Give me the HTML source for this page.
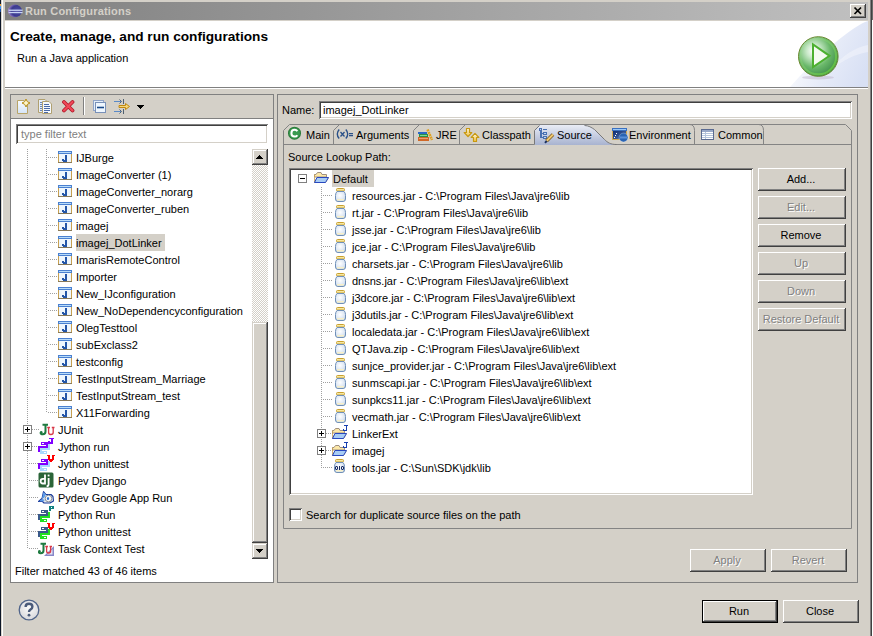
<!DOCTYPE html><html><head><meta charset="utf-8"><style>
html,body{margin:0;padding:0}
body{width:873px;height:636px;overflow:hidden;background:#d4d0c8;position:relative;font-family:"Liberation Sans",sans-serif;font-size:11px;color:#000}
div,svg{position:absolute}
.t{white-space:pre;line-height:13px;font-size:11px}
.b{white-space:pre;line-height:13px;font-size:11px;font-weight:bold}
.dis{color:#808080;text-shadow:1px 1px 0 #fff}
</style></head><body>

<div style="left:0px;top:0px;width:1px;height:636px;background:#0b1526"></div>
<div style="left:1px;top:0px;width:1px;height:636px;background:#d8d4cc"></div>
<div style="left:0px;top:4px;width:1px;height:2px;background:#e8a040"></div>
<div style="left:0px;top:6px;width:1px;height:3px;background:#3a90f0"></div>
<div style="left:0px;top:9px;width:1px;height:3px;background:#1a50a0"></div>
<div style="left:2px;top:0px;width:1px;height:636px;background:#ffffff"></div>
<div style="left:870px;top:0px;width:1px;height:636px;background:#808080"></div>
<div style="left:871px;top:0px;width:1px;height:636px;background:#404040"></div>
<div style="left:872px;top:0px;width:1px;height:636px;background:#fff"></div>
<div style="left:872px;top:0px;width:1px;height:20px;background:#6a6a6a"></div>
<div style="left:5px;top:2px;width:863px;height:18px;background:linear-gradient(to right,#808080,#c0c0c0)"></div>
<svg style="left:7px;top:3px" width="16" height="16" viewBox="0 0 16 16"><defs><radialGradient id="eg" cx="0.65" cy="0.5" r="0.75"><stop offset="0" stop-color="#5050a8"/><stop offset="0.55" stop-color="#3a3a8e"/><stop offset="0.8" stop-color="#8a70c0"/><stop offset="1" stop-color="#f0c8f0"/></radialGradient></defs><ellipse cx="8" cy="7.9" rx="7" ry="6.3" fill="url(#eg)"/><rect x="1.6" y="6.6" width="14" height="1.3" fill="#c8d4f4"/><rect x="1.6" y="8.9" width="14" height="1.3" fill="#c8d4f4"/></svg>
<div class="b" style="left:25px;top:5px;color:#d4d0c8;letter-spacing:0.2px">Run Configurations</div>
<div style="left:850px;top:4px;width:16px;height:14px;background:#d4d0c8;box-shadow:inset -1px -1px #404040,inset 1px 1px #fff,inset -2px -2px #808080"></div>
<svg style="left:850px;top:4px" width="16" height="14" viewBox="0 0 16 14"><path d="M4.5 3.5 L11 10 M11 3.5 L4.5 10" stroke="#000" stroke-width="1.7"/></svg>
<div style="left:5px;top:21px;width:863px;height:66px;background:#fff"></div>
<svg style="left:790px;top:21px" width="78" height="66" viewBox="0 0 78 66"><defs><linearGradient id="hg" x1="0" y1="0.3" x2="1" y2="0.7"><stop offset="0" stop-color="#fff"/><stop offset="0.55" stop-color="#e6ebf8"/><stop offset="1" stop-color="#d8e0f4"/></linearGradient></defs><path d="M78 0 C64 4 30 32 0 66 L78 66 Z" fill="url(#hg)"/><path d="M78 24 C66 26 52 34 40 50 C54 38 66 33 78 31 Z" fill="#f2f4fb" opacity="0.55"/></svg>
<div style="left:5px;top:87px;width:863px;height:1px;background:#808080"></div>
<div style="left:5px;top:88px;width:863px;height:1px;background:#fff"></div>
<div class="b" style="left:10px;top:31px;font-size:12px;transform:scaleX(1.138);transform-origin:0 0">Create, manage, and run configurations</div>
<div class="t" style="left:17px;top:52px;">Run a Java application</div>
<svg style="left:796px;top:34px" width="45" height="47" viewBox="0 0 45 47"><defs><radialGradient id="pg" cx="0.38" cy="0.36" r="0.7"><stop offset="0" stop-color="#ffffff"/><stop offset="0.25" stop-color="#c8e8c8"/><stop offset="0.6" stop-color="#6ab86a"/><stop offset="1" stop-color="#3a8a48"/></radialGradient><linearGradient id="pr" x1="0" y1="0" x2="1" y2="1"><stop offset="0" stop-color="#b8e8a0" stop-opacity="0"/><stop offset="1" stop-color="#58c030"/></linearGradient></defs><ellipse cx="22" cy="43.6" rx="16" ry="1.8" fill="#c0b4cc" opacity="0.5"/><circle cx="22.3" cy="22.5" r="19.8" fill="url(#pg)" stroke="#6a8a30" stroke-width="1"/><circle cx="22.3" cy="22.5" r="17.8" fill="none" stroke="url(#pr)" stroke-width="2"/><path d="M17 10.5 L17 33 L33.5 21.8 Z" fill="#f4fbf2" stroke="#4cb030" stroke-width="2" stroke-linejoin="miter"/></svg>
<div style="left:10px;top:94px;width:264px;height:489px;background:#d4d0c8;box-shadow:inset 0 0 0 1px #808080"></div>
<div style="left:11px;top:119px;width:262px;height:463px;background:#fff"></div>
<div style="left:11px;top:118px;width:262px;height:1px;background:#808080"></div>
<svg style="left:16px;top:98px" width="15" height="17" viewBox="0 0 15 17"><defs><linearGradient id="ng" x1="0" y1="0" x2="0" y2="1"><stop offset="0" stop-color="#fafcff"/><stop offset="1" stop-color="#d4e4f8"/></linearGradient></defs>
<path d="M1.5 2.5 H8 L11.5 6 V15.5 H1.5 Z" fill="url(#ng)" stroke="#b8a468" stroke-width="1"/>
<path d="M10 1 L11.3 3.7 L14 5 L11.3 6.3 L10 9 L8.7 6.3 L6 5 L8.7 3.7 Z" fill="#f8e490" stroke="#b89020" stroke-width="1"/>
<path d="M10 3 V7 M8 5 H12" stroke="#fffbe0" stroke-width="1"/></svg>
<svg style="left:37px;top:98px" width="17" height="17" viewBox="0 0 17 17"><path d="M1.5 1.5 H8 L10 3.5 V14.5 H1.5 Z" fill="#e8eef8" stroke="#b0a070" stroke-width="1"/>
<path d="M3 4.5 H5 M3 6.5 H5 M3 8.5 H5 M3 10.5 H5 M3 12.5 H5" stroke="#6a88b8" stroke-width="1"/>
<path d="M5.5 3.5 H12 L14.5 6 V15.5 H5.5 Z" fill="#f6f9fd" stroke="#b0a070" stroke-width="1"/>
<path d="M7 6.5 H12 M7 8.5 H13 M7 10.5 H13 M7 12.5 H13 M7 14.5 H11" stroke="#4a6aa8" stroke-width="1"/></svg>
<svg style="left:61px;top:99px" width="15" height="14" viewBox="0 0 15 14"><path d="M3 3 L11.5 11.5 M11.5 3 L3 11.5" stroke="#b01828" stroke-width="3.8" stroke-linecap="round"/>
<path d="M3 3 L11.5 11.5 M11.5 3 L3 11.5" stroke="#f04858" stroke-width="2.2" stroke-linecap="round"/></svg>
<div style="left:83px;top:97px;width:1px;height:18px;background:#808080"></div>
<div style="left:84px;top:97px;width:1px;height:18px;background:#fff"></div>
<svg style="left:92px;top:99px" width="15" height="15" viewBox="0 0 15 15"><rect x="1.5" y="1.5" width="10" height="10" fill="#e4eef8" stroke="#90a4c8"/>
<rect x="3.5" y="3.5" width="10" height="10" fill="#eef6fe" stroke="#7890b8"/>
<path d="M5 8.5 H12" stroke="#1a4a8a" stroke-width="1.6"/></svg>
<svg style="left:113px;top:98px" width="18" height="17" viewBox="0 0 18 17"><path d="M1 3.5 H8 M1 13.5 H8" stroke="#5a8ac8" stroke-width="1"/>
<path d="M6.5 1.5 L8.5 3.5 L6.5 5.5 M6.5 11.5 L8.5 13.5 L6.5 15.5" fill="none" stroke="#506070" stroke-width="1"/>
<path d="M10.5 1 V6 M10.5 11 V16" stroke="#506070" stroke-width="1"/>
<path d="M6 7.5 H12.5 V5.5 L16.5 8.5 L12.5 11.5 V9.5 H6 Z" fill="#f8d878" stroke="#c08810" stroke-width="1"/></svg>
<svg style="left:137px;top:105px" width="7" height="4" viewBox="0 0 7 4"><rect x="0" y="0" width="7" height="1" fill="#000"/><rect x="1" y="1" width="5" height="1" fill="#000"/><rect x="2" y="2" width="3" height="1" fill="#000"/><rect x="3" y="3" width="1" height="1" fill="#000"/></svg>
<div style="left:16px;top:124px;width:252px;height:20px;background:#fff;box-shadow:inset 1px 1px #808080,inset -1px -1px #fff,inset 2px 2px #404040,inset -2px -2px #d4d0c8"></div>
<div class="t" style="left:21px;top:128px;color:#808080">type filter text</div>
<div style="left:48px;top:157px;width:10px;height:1px;background:repeating-linear-gradient(to right,#a0a0a0 0,#a0a0a0 1px,transparent 1px,transparent 2px)"></div>
<svg style="left:58px;top:151px" width="14" height="12" viewBox="0 0 14 12"><rect x="0" y="0" width="14" height="12" fill="#c8a050"/><rect x="0" y="11" width="14" height="1" fill="#8a7a58"/><rect x="0" y="0" width="14" height="3" fill="#4a80d0"/><rect x="1" y="1" width="12" height="1" fill="#b8dcfa"/><rect x="1" y="3" width="12" height="8" fill="#eef6fd"/><rect x="7" y="4" width="2" height="6" fill="#2456a8"/><rect x="5" y="9" width="4" height="2" fill="#2456a8"/><rect x="4" y="8" width="2" height="2" fill="#2456a8"/></svg>
<div class="t" style="left:76px;top:152px;">IJBurge</div>
<div style="left:48px;top:174px;width:10px;height:1px;background:repeating-linear-gradient(to right,#a0a0a0 0,#a0a0a0 1px,transparent 1px,transparent 2px)"></div>
<svg style="left:58px;top:168px" width="14" height="12" viewBox="0 0 14 12"><rect x="0" y="0" width="14" height="12" fill="#c8a050"/><rect x="0" y="11" width="14" height="1" fill="#8a7a58"/><rect x="0" y="0" width="14" height="3" fill="#4a80d0"/><rect x="1" y="1" width="12" height="1" fill="#b8dcfa"/><rect x="1" y="3" width="12" height="8" fill="#eef6fd"/><rect x="7" y="4" width="2" height="6" fill="#2456a8"/><rect x="5" y="9" width="4" height="2" fill="#2456a8"/><rect x="4" y="8" width="2" height="2" fill="#2456a8"/></svg>
<div class="t" style="left:76px;top:169px;">ImageConverter (1)</div>
<div style="left:48px;top:191px;width:10px;height:1px;background:repeating-linear-gradient(to right,#a0a0a0 0,#a0a0a0 1px,transparent 1px,transparent 2px)"></div>
<svg style="left:58px;top:185px" width="14" height="12" viewBox="0 0 14 12"><rect x="0" y="0" width="14" height="12" fill="#c8a050"/><rect x="0" y="11" width="14" height="1" fill="#8a7a58"/><rect x="0" y="0" width="14" height="3" fill="#4a80d0"/><rect x="1" y="1" width="12" height="1" fill="#b8dcfa"/><rect x="1" y="3" width="12" height="8" fill="#eef6fd"/><rect x="7" y="4" width="2" height="6" fill="#2456a8"/><rect x="5" y="9" width="4" height="2" fill="#2456a8"/><rect x="4" y="8" width="2" height="2" fill="#2456a8"/></svg>
<div class="t" style="left:76px;top:186px;">ImageConverter_norarg</div>
<div style="left:48px;top:208px;width:10px;height:1px;background:repeating-linear-gradient(to right,#a0a0a0 0,#a0a0a0 1px,transparent 1px,transparent 2px)"></div>
<svg style="left:58px;top:202px" width="14" height="12" viewBox="0 0 14 12"><rect x="0" y="0" width="14" height="12" fill="#c8a050"/><rect x="0" y="11" width="14" height="1" fill="#8a7a58"/><rect x="0" y="0" width="14" height="3" fill="#4a80d0"/><rect x="1" y="1" width="12" height="1" fill="#b8dcfa"/><rect x="1" y="3" width="12" height="8" fill="#eef6fd"/><rect x="7" y="4" width="2" height="6" fill="#2456a8"/><rect x="5" y="9" width="4" height="2" fill="#2456a8"/><rect x="4" y="8" width="2" height="2" fill="#2456a8"/></svg>
<div class="t" style="left:76px;top:203px;">ImageConverter_ruben</div>
<div style="left:48px;top:225px;width:10px;height:1px;background:repeating-linear-gradient(to right,#a0a0a0 0,#a0a0a0 1px,transparent 1px,transparent 2px)"></div>
<svg style="left:58px;top:219px" width="14" height="12" viewBox="0 0 14 12"><rect x="0" y="0" width="14" height="12" fill="#c8a050"/><rect x="0" y="11" width="14" height="1" fill="#8a7a58"/><rect x="0" y="0" width="14" height="3" fill="#4a80d0"/><rect x="1" y="1" width="12" height="1" fill="#b8dcfa"/><rect x="1" y="3" width="12" height="8" fill="#eef6fd"/><rect x="7" y="4" width="2" height="6" fill="#2456a8"/><rect x="5" y="9" width="4" height="2" fill="#2456a8"/><rect x="4" y="8" width="2" height="2" fill="#2456a8"/></svg>
<div class="t" style="left:76px;top:220px;">imagej</div>
<div style="left:48px;top:242px;width:10px;height:1px;background:repeating-linear-gradient(to right,#a0a0a0 0,#a0a0a0 1px,transparent 1px,transparent 2px)"></div>
<svg style="left:58px;top:236px" width="14" height="12" viewBox="0 0 14 12"><rect x="0" y="0" width="14" height="12" fill="#c8a050"/><rect x="0" y="11" width="14" height="1" fill="#8a7a58"/><rect x="0" y="0" width="14" height="3" fill="#4a80d0"/><rect x="1" y="1" width="12" height="1" fill="#b8dcfa"/><rect x="1" y="3" width="12" height="8" fill="#eef6fd"/><rect x="7" y="4" width="2" height="6" fill="#2456a8"/><rect x="5" y="9" width="4" height="2" fill="#2456a8"/><rect x="4" y="8" width="2" height="2" fill="#2456a8"/></svg>
<div style="left:76px;top:234px;width:89px;height:17px;background:#d4d0c8"></div>
<div class="t" style="left:76px;top:237px;">imagej_DotLinker</div>
<div style="left:48px;top:259px;width:10px;height:1px;background:repeating-linear-gradient(to right,#a0a0a0 0,#a0a0a0 1px,transparent 1px,transparent 2px)"></div>
<svg style="left:58px;top:253px" width="14" height="12" viewBox="0 0 14 12"><rect x="0" y="0" width="14" height="12" fill="#c8a050"/><rect x="0" y="11" width="14" height="1" fill="#8a7a58"/><rect x="0" y="0" width="14" height="3" fill="#4a80d0"/><rect x="1" y="1" width="12" height="1" fill="#b8dcfa"/><rect x="1" y="3" width="12" height="8" fill="#eef6fd"/><rect x="7" y="4" width="2" height="6" fill="#2456a8"/><rect x="5" y="9" width="4" height="2" fill="#2456a8"/><rect x="4" y="8" width="2" height="2" fill="#2456a8"/></svg>
<div class="t" style="left:76px;top:254px;">ImarisRemoteControl</div>
<div style="left:48px;top:276px;width:10px;height:1px;background:repeating-linear-gradient(to right,#a0a0a0 0,#a0a0a0 1px,transparent 1px,transparent 2px)"></div>
<svg style="left:58px;top:270px" width="14" height="12" viewBox="0 0 14 12"><rect x="0" y="0" width="14" height="12" fill="#c8a050"/><rect x="0" y="11" width="14" height="1" fill="#8a7a58"/><rect x="0" y="0" width="14" height="3" fill="#4a80d0"/><rect x="1" y="1" width="12" height="1" fill="#b8dcfa"/><rect x="1" y="3" width="12" height="8" fill="#eef6fd"/><rect x="7" y="4" width="2" height="6" fill="#2456a8"/><rect x="5" y="9" width="4" height="2" fill="#2456a8"/><rect x="4" y="8" width="2" height="2" fill="#2456a8"/></svg>
<div class="t" style="left:76px;top:271px;">Importer</div>
<div style="left:48px;top:293px;width:10px;height:1px;background:repeating-linear-gradient(to right,#a0a0a0 0,#a0a0a0 1px,transparent 1px,transparent 2px)"></div>
<svg style="left:58px;top:287px" width="14" height="12" viewBox="0 0 14 12"><rect x="0" y="0" width="14" height="12" fill="#c8a050"/><rect x="0" y="11" width="14" height="1" fill="#8a7a58"/><rect x="0" y="0" width="14" height="3" fill="#4a80d0"/><rect x="1" y="1" width="12" height="1" fill="#b8dcfa"/><rect x="1" y="3" width="12" height="8" fill="#eef6fd"/><rect x="7" y="4" width="2" height="6" fill="#2456a8"/><rect x="5" y="9" width="4" height="2" fill="#2456a8"/><rect x="4" y="8" width="2" height="2" fill="#2456a8"/></svg>
<div class="t" style="left:76px;top:288px;">New_IJconfiguration</div>
<div style="left:48px;top:310px;width:10px;height:1px;background:repeating-linear-gradient(to right,#a0a0a0 0,#a0a0a0 1px,transparent 1px,transparent 2px)"></div>
<svg style="left:58px;top:304px" width="14" height="12" viewBox="0 0 14 12"><rect x="0" y="0" width="14" height="12" fill="#c8a050"/><rect x="0" y="11" width="14" height="1" fill="#8a7a58"/><rect x="0" y="0" width="14" height="3" fill="#4a80d0"/><rect x="1" y="1" width="12" height="1" fill="#b8dcfa"/><rect x="1" y="3" width="12" height="8" fill="#eef6fd"/><rect x="7" y="4" width="2" height="6" fill="#2456a8"/><rect x="5" y="9" width="4" height="2" fill="#2456a8"/><rect x="4" y="8" width="2" height="2" fill="#2456a8"/></svg>
<div class="t" style="left:76px;top:305px;">New_NoDependencyconfiguration</div>
<div style="left:48px;top:327px;width:10px;height:1px;background:repeating-linear-gradient(to right,#a0a0a0 0,#a0a0a0 1px,transparent 1px,transparent 2px)"></div>
<svg style="left:58px;top:321px" width="14" height="12" viewBox="0 0 14 12"><rect x="0" y="0" width="14" height="12" fill="#c8a050"/><rect x="0" y="11" width="14" height="1" fill="#8a7a58"/><rect x="0" y="0" width="14" height="3" fill="#4a80d0"/><rect x="1" y="1" width="12" height="1" fill="#b8dcfa"/><rect x="1" y="3" width="12" height="8" fill="#eef6fd"/><rect x="7" y="4" width="2" height="6" fill="#2456a8"/><rect x="5" y="9" width="4" height="2" fill="#2456a8"/><rect x="4" y="8" width="2" height="2" fill="#2456a8"/></svg>
<div class="t" style="left:76px;top:322px;">OlegTesttool</div>
<div style="left:48px;top:344px;width:10px;height:1px;background:repeating-linear-gradient(to right,#a0a0a0 0,#a0a0a0 1px,transparent 1px,transparent 2px)"></div>
<svg style="left:58px;top:338px" width="14" height="12" viewBox="0 0 14 12"><rect x="0" y="0" width="14" height="12" fill="#c8a050"/><rect x="0" y="11" width="14" height="1" fill="#8a7a58"/><rect x="0" y="0" width="14" height="3" fill="#4a80d0"/><rect x="1" y="1" width="12" height="1" fill="#b8dcfa"/><rect x="1" y="3" width="12" height="8" fill="#eef6fd"/><rect x="7" y="4" width="2" height="6" fill="#2456a8"/><rect x="5" y="9" width="4" height="2" fill="#2456a8"/><rect x="4" y="8" width="2" height="2" fill="#2456a8"/></svg>
<div class="t" style="left:76px;top:339px;">subExclass2</div>
<div style="left:48px;top:361px;width:10px;height:1px;background:repeating-linear-gradient(to right,#a0a0a0 0,#a0a0a0 1px,transparent 1px,transparent 2px)"></div>
<svg style="left:58px;top:355px" width="14" height="12" viewBox="0 0 14 12"><rect x="0" y="0" width="14" height="12" fill="#c8a050"/><rect x="0" y="11" width="14" height="1" fill="#8a7a58"/><rect x="0" y="0" width="14" height="3" fill="#4a80d0"/><rect x="1" y="1" width="12" height="1" fill="#b8dcfa"/><rect x="1" y="3" width="12" height="8" fill="#eef6fd"/><rect x="7" y="4" width="2" height="6" fill="#2456a8"/><rect x="5" y="9" width="4" height="2" fill="#2456a8"/><rect x="4" y="8" width="2" height="2" fill="#2456a8"/></svg>
<div class="t" style="left:76px;top:356px;">testconfig</div>
<div style="left:48px;top:378px;width:10px;height:1px;background:repeating-linear-gradient(to right,#a0a0a0 0,#a0a0a0 1px,transparent 1px,transparent 2px)"></div>
<svg style="left:58px;top:372px" width="14" height="12" viewBox="0 0 14 12"><rect x="0" y="0" width="14" height="12" fill="#c8a050"/><rect x="0" y="11" width="14" height="1" fill="#8a7a58"/><rect x="0" y="0" width="14" height="3" fill="#4a80d0"/><rect x="1" y="1" width="12" height="1" fill="#b8dcfa"/><rect x="1" y="3" width="12" height="8" fill="#eef6fd"/><rect x="7" y="4" width="2" height="6" fill="#2456a8"/><rect x="5" y="9" width="4" height="2" fill="#2456a8"/><rect x="4" y="8" width="2" height="2" fill="#2456a8"/></svg>
<div class="t" style="left:76px;top:373px;">TestInputStream_Marriage</div>
<div style="left:48px;top:395px;width:10px;height:1px;background:repeating-linear-gradient(to right,#a0a0a0 0,#a0a0a0 1px,transparent 1px,transparent 2px)"></div>
<svg style="left:58px;top:389px" width="14" height="12" viewBox="0 0 14 12"><rect x="0" y="0" width="14" height="12" fill="#c8a050"/><rect x="0" y="11" width="14" height="1" fill="#8a7a58"/><rect x="0" y="0" width="14" height="3" fill="#4a80d0"/><rect x="1" y="1" width="12" height="1" fill="#b8dcfa"/><rect x="1" y="3" width="12" height="8" fill="#eef6fd"/><rect x="7" y="4" width="2" height="6" fill="#2456a8"/><rect x="5" y="9" width="4" height="2" fill="#2456a8"/><rect x="4" y="8" width="2" height="2" fill="#2456a8"/></svg>
<div class="t" style="left:76px;top:390px;">TestInputStream_test</div>
<div style="left:48px;top:412px;width:10px;height:1px;background:repeating-linear-gradient(to right,#a0a0a0 0,#a0a0a0 1px,transparent 1px,transparent 2px)"></div>
<svg style="left:58px;top:406px" width="14" height="12" viewBox="0 0 14 12"><rect x="0" y="0" width="14" height="12" fill="#c8a050"/><rect x="0" y="11" width="14" height="1" fill="#8a7a58"/><rect x="0" y="0" width="14" height="3" fill="#4a80d0"/><rect x="1" y="1" width="12" height="1" fill="#b8dcfa"/><rect x="1" y="3" width="12" height="8" fill="#eef6fd"/><rect x="7" y="4" width="2" height="6" fill="#2456a8"/><rect x="5" y="9" width="4" height="2" fill="#2456a8"/><rect x="4" y="8" width="2" height="2" fill="#2456a8"/></svg>
<div class="t" style="left:76px;top:407px;">X11Forwarding</div>
<div style="left:32px;top:429px;width:7px;height:1px;background:repeating-linear-gradient(to right,#a0a0a0 0,#a0a0a0 1px,transparent 1px,transparent 2px)"></div>
<svg style="left:39px;top:421px" width="17" height="15" viewBox="0 0 17 15"><path d="M3.5 3.8 H9 M6.5 3.8 V10.5 Q6.5 13.3 3.8 13.3 Q1.8 13.3 1.5 11.5" fill="none" stroke="#1e7a40" stroke-width="2"/>
<circle cx="2.2" cy="11.2" r="1.3" fill="#1e7a40"/>
<path d="M8.2 6.5 H11 M12.8 6.5 H15.5 M9.6 6.5 V11.5 Q9.6 13.5 11.8 13.5 Q14.2 13.5 14.2 11.5 V6.5" fill="none" stroke="#d83848" stroke-width="1.3"/></svg>
<div class="t" style="left:58px;top:424px;">JUnit</div>
<div style="left:32px;top:446px;width:7px;height:1px;background:repeating-linear-gradient(to right,#a0a0a0 0,#a0a0a0 1px,transparent 1px,transparent 2px)"></div>
<svg style="left:38px;top:438px" width="17" height="17" viewBox="0 0 17 17"><g shape-rendering="crispEdges"><rect x="3" y="4" width="7" height="3" fill="#8000ff"/><rect x="8" y="5" width="2" height="5" fill="#8000ff"/><rect x="0" y="8" width="10" height="2" fill="#8000ff"/><rect x="0" y="8" width="2" height="6" fill="#8000ff"/><rect x="4" y="5" width="2" height="1" fill="#fff"/><rect x="10" y="6" width="2" height="6" fill="#a8d8ff"/><rect x="2" y="10" width="10" height="2" fill="#a8d8ff"/><rect x="2" y="10" width="2" height="6" fill="#a8d8ff"/><rect x="2" y="13" width="7" height="3" fill="#a8d8ff"/><rect x="6" y="14" width="2" height="1" fill="#fff"/></g><rect x="11" y="0" width="5" height="1" fill="#8000ff"/><rect x="13" y="0" width="2" height="6" fill="#8000ff"/><rect x="10" y="4" width="4" height="2" fill="#8000ff"/><rect x="10" y="3" width="2" height="2" fill="#8000ff"/></svg>
<div class="t" style="left:58px;top:441px;">Jython run</div>
<div style="left:29px;top:463px;width:10px;height:1px;background:repeating-linear-gradient(to right,#a0a0a0 0,#a0a0a0 1px,transparent 1px,transparent 2px)"></div>
<svg style="left:38px;top:455px" width="17" height="17" viewBox="0 0 17 17"><g shape-rendering="crispEdges"><rect x="3" y="4" width="7" height="3" fill="#8000ff"/><rect x="8" y="5" width="2" height="5" fill="#8000ff"/><rect x="0" y="8" width="10" height="2" fill="#8000ff"/><rect x="0" y="8" width="2" height="6" fill="#8000ff"/><rect x="4" y="5" width="2" height="1" fill="#fff"/><rect x="10" y="6" width="2" height="6" fill="#a8d8ff"/><rect x="2" y="10" width="10" height="2" fill="#a8d8ff"/><rect x="2" y="10" width="2" height="6" fill="#a8d8ff"/><rect x="2" y="13" width="7" height="3" fill="#a8d8ff"/><rect x="6" y="14" width="2" height="1" fill="#fff"/></g><rect x="9" y="0" width="3" height="1" fill="#ff0000"/><rect x="10" y="0" width="2" height="5" fill="#ff0000"/><rect x="14" y="0" width="3" height="1" fill="#ff0000"/><rect x="14" y="0" width="2" height="5" fill="#ff0000"/><rect x="11" y="4" width="4" height="2" fill="#ff0000"/><rect x="12" y="5" width="2" height="2" fill="#ff0000"/></svg>
<div class="t" style="left:58px;top:458px;">Jython unittest</div>
<div style="left:29px;top:480px;width:10px;height:1px;background:repeating-linear-gradient(to right,#a0a0a0 0,#a0a0a0 1px,transparent 1px,transparent 2px)"></div>
<svg style="left:38px;top:472px" width="16" height="16" viewBox="0 0 16 16"><rect x="0.5" y="0.5" width="15" height="15" rx="1.5" fill="#2a6438"/>
<path d="M7 2.5 V11.5 H4.8 Q2.6 11.5 2.6 9.2 Q2.6 6.8 4.8 6.8 H7" fill="none" stroke="#fff" stroke-width="1.8"/>
<path d="M10.6 6 V12.2 Q10.6 14.2 8.6 14.2" fill="none" stroke="#fff" stroke-width="1.8"/><rect x="9.7" y="2.6" width="1.8" height="1.8" fill="#fff"/></svg>
<div class="t" style="left:58px;top:475px;">Pydev Django</div>
<div style="left:29px;top:497px;width:10px;height:1px;background:repeating-linear-gradient(to right,#a0a0a0 0,#a0a0a0 1px,transparent 1px,transparent 2px)"></div>
<svg style="left:38px;top:490px" width="17" height="15" viewBox="0 0 17 15"><path d="M5.5 1.5 L8 4.5 H13 L15 6.5 L15.5 11 L12 13 H6 L4.5 11.5 L0.5 11.5 L4 8.5 Z" fill="#dfe6ee" stroke="#1a3a9a" stroke-width="1.1" stroke-linejoin="round"/>
<path d="M5.5 2 L8 4.5 L6 8 L4 8.5 Z" fill="#5a9ae8"/><path d="M1 11.3 L4.5 9 L7 10 L4.5 11.5 Z" fill="#5a9ae8"/>
<circle cx="10.5" cy="8.5" r="3.3" fill="#f4f6f8" stroke="#8a9098" stroke-width="1"/><ellipse cx="10" cy="8.5" rx="1.1" ry="1.6" fill="#2a70d0"/></svg>
<div class="t" style="left:58px;top:492px;">Pydev Google App Run</div>
<div style="left:29px;top:514px;width:10px;height:1px;background:repeating-linear-gradient(to right,#a0a0a0 0,#a0a0a0 1px,transparent 1px,transparent 2px)"></div>
<svg style="left:38px;top:506px" width="17" height="17" viewBox="0 0 17 17"><g shape-rendering="crispEdges"><rect x="3" y="4" width="7" height="3" fill="#3a5a8a"/><rect x="8" y="5" width="2" height="5" fill="#3a5a8a"/><rect x="0" y="8" width="10" height="2" fill="#3a5a8a"/><rect x="0" y="8" width="2" height="6" fill="#3a5a8a"/><rect x="4" y="5" width="2" height="1" fill="#fff"/><rect x="10" y="6" width="2" height="6" fill="#20e020"/><rect x="2" y="10" width="10" height="2" fill="#20e020"/><rect x="2" y="10" width="2" height="6" fill="#20e020"/><rect x="2" y="13" width="7" height="3" fill="#20e020"/><rect x="6" y="14" width="2" height="1" fill="#fff"/></g><rect x="11" y="0" width="2" height="5" fill="#108080"/><rect x="13" y="0" width="2" height="1" fill="#108080"/><rect x="14" y="0" width="2" height="3" fill="#108080"/><rect x="13" y="2" width="2" height="1" fill="#108080"/></svg>
<div class="t" style="left:58px;top:509px;">Python Run</div>
<div style="left:29px;top:531px;width:10px;height:1px;background:repeating-linear-gradient(to right,#a0a0a0 0,#a0a0a0 1px,transparent 1px,transparent 2px)"></div>
<svg style="left:38px;top:523px" width="17" height="17" viewBox="0 0 17 17"><g shape-rendering="crispEdges"><rect x="3" y="4" width="7" height="3" fill="#3a5a8a"/><rect x="8" y="5" width="2" height="5" fill="#3a5a8a"/><rect x="0" y="8" width="10" height="2" fill="#3a5a8a"/><rect x="0" y="8" width="2" height="6" fill="#3a5a8a"/><rect x="4" y="5" width="2" height="1" fill="#fff"/><rect x="10" y="6" width="2" height="6" fill="#20e020"/><rect x="2" y="10" width="10" height="2" fill="#20e020"/><rect x="2" y="10" width="2" height="6" fill="#20e020"/><rect x="2" y="13" width="7" height="3" fill="#20e020"/><rect x="6" y="14" width="2" height="1" fill="#fff"/></g><rect x="9" y="0" width="3" height="1" fill="#ff0000"/><rect x="10" y="0" width="2" height="5" fill="#ff0000"/><rect x="14" y="0" width="3" height="1" fill="#ff0000"/><rect x="14" y="0" width="2" height="5" fill="#ff0000"/><rect x="11" y="4" width="4" height="2" fill="#ff0000"/><rect x="12" y="5" width="2" height="2" fill="#ff0000"/></svg>
<div class="t" style="left:58px;top:526px;">Python unittest</div>
<div style="left:29px;top:548px;width:10px;height:1px;background:repeating-linear-gradient(to right,#a0a0a0 0,#a0a0a0 1px,transparent 1px,transparent 2px)"></div>
<svg style="left:38px;top:540px" width="17" height="17" viewBox="0 0 17 17"><path d="M6 16 L16 6 V16 Z" fill="#8888c8"/><path d="M9 14.5 L14.5 9 V14.5 Z" fill="#e4e4f4"/>
<path d="M2.5 3.8 H8 M5.5 3.8 V10.5 Q5.5 13.3 2.8 13.3 Q0.8 13.3 0.5 11.5" fill="none" stroke="#1e7a40" stroke-width="2"/>
<circle cx="1.4" cy="11.2" r="1.3" fill="#1e7a40"/>
<path d="M7.2 6.5 H10 M11.5 6.5 H14 M8.6 6.5 V11 Q8.6 13 10.6 13 Q12.6 13 12.6 11 V6.5" fill="none" stroke="#d83848" stroke-width="1.3"/></svg>
<div class="t" style="left:58px;top:543px;">Task Context Test</div>
<div style="left:27px;top:149px;width:1px;height:400px;background:repeating-linear-gradient(to bottom,#a0a0a0 0,#a0a0a0 1px,transparent 1px,transparent 2px)"></div>
<div style="left:46px;top:149px;width:1px;height:264px;background:repeating-linear-gradient(to bottom,#a0a0a0 0,#a0a0a0 1px,transparent 1px,transparent 2px)"></div>
<div style="left:23px;top:425px;width:9px;height:9px;background:#fff;box-shadow:inset 0 0 0 1px #808080"></div>
<div style="left:25px;top:429px;width:5px;height:1px;background:#000"></div>
<div style="left:27px;top:427px;width:1px;height:5px;background:#000"></div>
<div style="left:23px;top:442px;width:9px;height:9px;background:#fff;box-shadow:inset 0 0 0 1px #808080"></div>
<div style="left:25px;top:446px;width:5px;height:1px;background:#000"></div>
<div style="left:27px;top:444px;width:1px;height:5px;background:#000"></div>
<div style="left:252px;top:165px;width:16px;height:157px;background-color:#fff;background-image:repeating-conic-gradient(#d4d0c8 0 25%,#fff 0 50%);background-size:2px 2px;background-position:0 1px"></div>
<div style="left:252px;top:149px;width:16px;height:16px;background:#d4d0c8;box-shadow:inset -1px -1px #404040,inset 1px 1px #d4d0c8,inset -2px -2px #808080,inset 2px 2px #fff"></div>
<svg style="left:252px;top:149px" width="16" height="16" viewBox="0 0 16 16"><rect x="7" y="6" width="1" height="1" fill="#000"/><rect x="6" y="7" width="3" height="1" fill="#000"/><rect x="5" y="8" width="5" height="1" fill="#000"/><rect x="4" y="9" width="7" height="1" fill="#000"/></svg>
<div style="left:252px;top:322px;width:16px;height:221px;background:#d4d0c8;box-shadow:inset -1px -1px #404040,inset 1px 1px #d4d0c8,inset -2px -2px #808080,inset 2px 2px #fff"></div>
<div style="left:252px;top:543px;width:16px;height:16px;background:#d4d0c8;box-shadow:inset -1px -1px #404040,inset 1px 1px #d4d0c8,inset -2px -2px #808080,inset 2px 2px #fff"></div>
<svg style="left:252px;top:543px" width="16" height="16" viewBox="0 0 16 16"><rect x="7" y="9" width="1" height="1" fill="#000"/><rect x="6" y="8" width="3" height="1" fill="#000"/><rect x="5" y="7" width="5" height="1" fill="#000"/><rect x="4" y="6" width="7" height="1" fill="#000"/></svg>
<div class="t" style="left:15px;top:565px;">Filter matched 43 of 46 items</div>
<svg style="left:18px;top:599px" width="22" height="22" viewBox="0 0 22 22"><defs><radialGradient id="hgr" cx="0.5" cy="0.4" r="0.6"><stop offset="0" stop-color="#fafafa"/><stop offset="1" stop-color="#d8d8dc"/></radialGradient></defs>
<circle cx="11" cy="11" r="9.8" fill="url(#hgr)" stroke="#50648a" stroke-width="1.3"/>
<path d="M7.6 8 Q7.6 4.8 11 4.8 Q14.4 4.8 14.4 7.8 Q14.4 9.6 12.4 10.6 Q11 11.3 11 13" fill="none" stroke="#4a5a7a" stroke-width="2.4"/>
<circle cx="11" cy="16.2" r="1.4" fill="#4a5a7a"/></svg>
<div style="left:277px;top:94px;width:581px;height:489px;background:#d4d0c8;box-shadow:inset 0 0 0 1px #808080"></div>
<div class="t" style="left:282px;top:104px;">Name:</div>
<div style="left:319px;top:101px;width:533px;height:18px;background:#fff;box-shadow:inset 1px 1px #808080,inset -1px -1px #fff,inset 2px 2px #404040,inset -2px -2px #d4d0c8"></div>
<div class="t" style="left:323px;top:104px;">imagej_DotLinker</div>
<svg style="left:280px;top:120px" width="580" height="415" viewBox="0 0 580 415"><defs><linearGradient id="selg" x1="0" y1="0" x2="0" y2="1"><stop offset="0" stop-color="#e9ecf5"/><stop offset="1" stop-color="#a8b3d0"/></linearGradient></defs><path d="M535 145 L535 130 L540 125 L585 125 C589 125.5 591 127 594.5 129.5 L604.5 139.5 C607.5 142.5 610 144.5 615.5 144.5 L615.5 145 Z" transform="translate(-280,-120)" fill="url(#selg)" stroke="none"/><path d="M3.5 408.5 L3.5 10.5 L9.5 4.5 L565.5 4.5 L571.5 10.5 L571.5 408.5 Z" fill="none" stroke="#848484" stroke-width="1"/><path d="M3.5 24.5 L254.5 24.5 M334.5 24.5 L571.5 24.5" stroke="#848484" stroke-width="1"/><path d="M254.5 24.5 L254.5 10.5 L259.5 5.5 M304.5 5.5 C308.5 5.5 311.5 7.5 314.5 9.5 L324.5 19.5 C327.5 22.5 330.5 24.5 336.5 24.5" fill="none" stroke="#787878" stroke-width="1"/><path d="M53.5 24.5 L53.5 10.5 L59.5 4.5" fill="none" stroke="#848484" stroke-width="1"/><path d="M133.5 24.5 L133.5 10.5 L139.5 4.5" fill="none" stroke="#848484" stroke-width="1"/><path d="M179.5 24.5 L179.5 10.5 L185.5 4.5" fill="none" stroke="#848484" stroke-width="1"/><path d="M409.5 4.5 Q414.5 4.5 414.5 10.5 L414.5 24.5" fill="none" stroke="#848484" stroke-width="1"/><path d="M478.5 4.5 Q483.5 4.5 483.5 10.5 L483.5 24.5" fill="none" stroke="#848484" stroke-width="1"/></svg>
<div class="t" style="left:306px;top:129px;">Main</div>
<div class="t" style="left:356px;top:129px;">Arguments</div>
<div class="t" style="left:436px;top:129px;">JRE</div>
<div class="t" style="left:482px;top:129px;">Classpath</div>
<div class="t" style="left:557px;top:129px;">Source</div>
<div class="t" style="left:629px;top:129px;">Environment</div>
<div class="t" style="left:718px;top:129px;">Common</div>
<svg style="left:287px;top:126px" width="15" height="15" viewBox="0 0 15 15"><circle cx="7.5" cy="7.2" r="6.5" fill="#2a7a3a"/><circle cx="7.5" cy="7.2" r="5.5" fill="#3a9a50"/>
<path d="M10.3 5.2 Q9.5 3.8 7.7 3.8 Q4.4 3.8 4.4 7.2 Q4.4 10.6 7.7 10.6 Q9.5 10.6 10.3 9.2" fill="none" stroke="#fff" stroke-width="2"/></svg>
<svg style="left:336px;top:128px" width="18" height="12" viewBox="0 0 18 12"><path d="M3.2 1.5 Q1.3 3.5 1.3 6 Q1.3 8.5 3.2 10.5 M9.8 1.5 Q11.7 3.5 11.7 6 Q11.7 8.5 9.8 10.5" fill="none" stroke="#2a5088" stroke-width="1.4"/><path d="M4.5 4 L8.5 8.5 M8.5 4 L4.5 8.5" stroke="#2a5088" stroke-width="1.3"/><path d="M13 5.6 H17 M13 7.6 H17" stroke="#2a5088" stroke-width="1.1"/></svg>
<svg style="left:417px;top:127px" width="17" height="15" viewBox="0 0 17 15"><rect x="1" y="10" width="11" height="4" fill="#d06828"/><rect x="2" y="11" width="9" height="1" fill="#f0a070"/><rect x="2" y="7" width="9" height="3" fill="#2a9048"/><rect x="3" y="8" width="7" height="1" fill="#80d898"/><rect x="1" y="5" width="9" height="2" fill="#2a68c8"/><path d="M10.5 2.5 L15 13" stroke="#e0a020" stroke-width="2.6" stroke-dasharray="2 0.6"/></svg>
<svg style="left:463px;top:127px" width="18" height="16" viewBox="0 0 18 16"><defs><linearGradient id="arg" x1="0" y1="0" x2="0" y2="1"><stop offset="0" stop-color="#fffbe8"/><stop offset="1" stop-color="#f0c040"/></linearGradient></defs><path d="M3.5 1.5 H6.5 V5.5 H8.8 L5 9.6 L1.2 5.5 H3.5 Z" fill="url(#arg)" stroke="#c89810" stroke-width="1.2" stroke-linejoin="round"/><path d="M10.5 14.5 H13.5 V10.5 H15.8 L12 6.4 L8.2 10.5 H10.5 Z" fill="url(#arg)" stroke="#c89810" stroke-width="1.2" stroke-linejoin="round"/></svg>
<svg style="left:538px;top:127px" width="18" height="17" viewBox="0 0 18 17"><rect x="1" y="1" width="3" height="3" fill="#4a70b0"/><rect x="5" y="5" width="4" height="3" fill="#4a70b0"/><rect x="5" y="9" width="4" height="3" fill="#4a70b0"/><rect x="2" y="2" width="1" height="1" fill="#c8d8f0"/><rect x="6" y="6" width="2" height="1" fill="#c8d8f0"/><rect x="6" y="10" width="2" height="1" fill="#c8d8f0"/><rect x="5" y="2" width="4" height="1" fill="#4a70b0"/><rect x="2" y="4" width="2" height="6" fill="#4a70b0"/><rect x="2" y="6" width="4" height="1" fill="#4a70b0"/><rect x="2" y="10" width="4" height="1" fill="#4a70b0"/><path d="M15 7.5 L8.5 14" stroke="#7a5a20" stroke-width="3.6"/><path d="M15 7.5 L8.5 14" stroke="#f0c870" stroke-width="2"/><path d="M8.8 13.8 L7 15.8" stroke="#1a3060" stroke-width="2"/></svg>
<svg style="left:611px;top:127px" width="18" height="17" viewBox="0 0 18 17"><defs><linearGradient id="envg" x1="0" y1="0" x2="1" y2="1"><stop offset="0" stop-color="#0e2a70"/><stop offset="0.6" stop-color="#3a5a98"/><stop offset="1" stop-color="#b0b8c8"/></linearGradient></defs>
<rect x="1" y="1" width="15" height="12" fill="#d0a850"/><rect x="2" y="4" width="13" height="8" fill="url(#envg)"/>
<rect x="1" y="1" width="15" height="3" fill="#3a70c0"/><rect x="2" y="2" width="13" height="1" fill="#9ac8f8"/>
<rect x="3" y="10" width="1" height="1" fill="#fff"/><rect x="4" y="8" width="1" height="1" fill="#fff"/><rect x="5" y="6" width="1" height="1" fill="#fff"/>
<circle cx="12.5" cy="10.5" r="4.4" fill="#2a64b4" stroke="#fff" stroke-width="0.5" stroke-opacity="0.5"/><rect x="9" y="9.5" width="7" height="2" fill="#5a90d8"/></svg>
<svg style="left:701px;top:129px" width="13" height="11" viewBox="0 0 13 11"><rect x="0" y="0" width="13" height="11" fill="#5a6a90"/><rect x="1" y="1" width="11" height="2" fill="#98a8c8"/><rect x="1" y="3" width="11" height="7" fill="#b4c4dc"/><rect x="1" y="3" width="3" height="1" fill="#fff"/><rect x="5" y="3" width="7" height="1" fill="#fff"/><rect x="1" y="5" width="3" height="1" fill="#fff"/><rect x="5" y="5" width="7" height="1" fill="#fff"/><rect x="1" y="7" width="3" height="1" fill="#fff"/><rect x="5" y="7" width="7" height="1" fill="#fff"/><rect x="1" y="9" width="3" height="1" fill="#fff"/><rect x="5" y="9" width="7" height="1" fill="#fff"/></svg>
<div class="t" style="left:288px;top:151px;">Source Lookup Path:</div>
<div style="left:289px;top:168px;width:464px;height:327px;background:#fff;box-shadow:inset 1px 1px #808080,inset -1px -1px #fff,inset 2px 2px #404040,inset -2px -2px #d4d0c8"></div>
<div style="left:298px;top:174px;width:9px;height:9px;background:#fff;box-shadow:inset 0 0 0 1px #808080"></div>
<div style="left:300px;top:178px;width:5px;height:1px;background:#000"></div>
<svg style="left:313px;top:171px" width="17" height="13" viewBox="0 0 17 13"><path d="M1.5 3.5 H3 L4.5 1.5 H8 L9 3.5 H13.5 V6 H1.5 Z" fill="#fce8a8" stroke="#a09080" stroke-width="1"/>
<path d="M1.5 3.5 V11.5 L4 6.5 H15.5 L12.5 11.5 H1.5" fill="#f8d888" stroke="#c8a050" stroke-width="0.8"/>
<path d="M4 6.5 H15.5 L12.5 11.5 H1.5 Z" fill="#a8ccf4" stroke="#2848c0" stroke-width="1"/></svg>
<div style="left:332px;top:170px;width:42px;height:17px;background:#d4d0c8"></div>
<div class="t" style="left:333px;top:173px;">Default</div>
<div style="left:323px;top:195px;width:10px;height:1px;background:repeating-linear-gradient(to right,#a0a0a0 0,#a0a0a0 1px,transparent 1px,transparent 2px)"></div>
<svg style="left:335px;top:188px" width="11" height="14" viewBox="0 0 11 14"><defs><radialGradient id="jg" cx="0.45" cy="0.4" r="0.7"><stop offset="0" stop-color="#fff"/><stop offset="0.6" stop-color="#dfe8f4"/><stop offset="1" stop-color="#b8cce4"/></radialGradient></defs>
<rect x="1.5" y="0.5" width="8" height="2.5" rx="1" fill="#f8e8a0" stroke="#c8a030"/>
<path d="M2 3.5 H9 Q10.5 5 10.5 7.5 V11 Q10.5 13.5 8 13.5 H3 Q0.5 13.5 0.5 11 V7.5 Q0.5 5 2 3.5 Z" fill="url(#jg)" stroke="#7090b8" stroke-width="1"/>
<rect x="2" y="11" width="7" height="1.5" fill="#f8f0c8"/></svg>
<div class="t" style="left:352px;top:190px;">resources.jar - C:\Program Files\Java\jre6\lib</div>
<div style="left:323px;top:212px;width:10px;height:1px;background:repeating-linear-gradient(to right,#a0a0a0 0,#a0a0a0 1px,transparent 1px,transparent 2px)"></div>
<svg style="left:335px;top:205px" width="11" height="14" viewBox="0 0 11 14"><defs style="display:none"><radialGradient id="jg" cx="0.45" cy="0.4" r="0.7"><stop offset="0" stop-color="#fff"/><stop offset="0.6" stop-color="#dfe8f4"/><stop offset="1" stop-color="#b8cce4"/></radialGradient></defs>
<rect x="1.5" y="0.5" width="8" height="2.5" rx="1" fill="#f8e8a0" stroke="#c8a030"/>
<path d="M2 3.5 H9 Q10.5 5 10.5 7.5 V11 Q10.5 13.5 8 13.5 H3 Q0.5 13.5 0.5 11 V7.5 Q0.5 5 2 3.5 Z" fill="url(#jg)" stroke="#7090b8" stroke-width="1"/>
<rect x="2" y="11" width="7" height="1.5" fill="#f8f0c8"/></svg>
<div class="t" style="left:352px;top:207px;">rt.jar - C:\Program Files\Java\jre6\lib</div>
<div style="left:323px;top:229px;width:10px;height:1px;background:repeating-linear-gradient(to right,#a0a0a0 0,#a0a0a0 1px,transparent 1px,transparent 2px)"></div>
<svg style="left:335px;top:222px" width="11" height="14" viewBox="0 0 11 14"><defs style="display:none"><radialGradient id="jg" cx="0.45" cy="0.4" r="0.7"><stop offset="0" stop-color="#fff"/><stop offset="0.6" stop-color="#dfe8f4"/><stop offset="1" stop-color="#b8cce4"/></radialGradient></defs>
<rect x="1.5" y="0.5" width="8" height="2.5" rx="1" fill="#f8e8a0" stroke="#c8a030"/>
<path d="M2 3.5 H9 Q10.5 5 10.5 7.5 V11 Q10.5 13.5 8 13.5 H3 Q0.5 13.5 0.5 11 V7.5 Q0.5 5 2 3.5 Z" fill="url(#jg)" stroke="#7090b8" stroke-width="1"/>
<rect x="2" y="11" width="7" height="1.5" fill="#f8f0c8"/></svg>
<div class="t" style="left:352px;top:224px;">jsse.jar - C:\Program Files\Java\jre6\lib</div>
<div style="left:323px;top:246px;width:10px;height:1px;background:repeating-linear-gradient(to right,#a0a0a0 0,#a0a0a0 1px,transparent 1px,transparent 2px)"></div>
<svg style="left:335px;top:239px" width="11" height="14" viewBox="0 0 11 14"><defs style="display:none"><radialGradient id="jg" cx="0.45" cy="0.4" r="0.7"><stop offset="0" stop-color="#fff"/><stop offset="0.6" stop-color="#dfe8f4"/><stop offset="1" stop-color="#b8cce4"/></radialGradient></defs>
<rect x="1.5" y="0.5" width="8" height="2.5" rx="1" fill="#f8e8a0" stroke="#c8a030"/>
<path d="M2 3.5 H9 Q10.5 5 10.5 7.5 V11 Q10.5 13.5 8 13.5 H3 Q0.5 13.5 0.5 11 V7.5 Q0.5 5 2 3.5 Z" fill="url(#jg)" stroke="#7090b8" stroke-width="1"/>
<rect x="2" y="11" width="7" height="1.5" fill="#f8f0c8"/></svg>
<div class="t" style="left:352px;top:241px;">jce.jar - C:\Program Files\Java\jre6\lib</div>
<div style="left:323px;top:263px;width:10px;height:1px;background:repeating-linear-gradient(to right,#a0a0a0 0,#a0a0a0 1px,transparent 1px,transparent 2px)"></div>
<svg style="left:335px;top:256px" width="11" height="14" viewBox="0 0 11 14"><defs style="display:none"><radialGradient id="jg" cx="0.45" cy="0.4" r="0.7"><stop offset="0" stop-color="#fff"/><stop offset="0.6" stop-color="#dfe8f4"/><stop offset="1" stop-color="#b8cce4"/></radialGradient></defs>
<rect x="1.5" y="0.5" width="8" height="2.5" rx="1" fill="#f8e8a0" stroke="#c8a030"/>
<path d="M2 3.5 H9 Q10.5 5 10.5 7.5 V11 Q10.5 13.5 8 13.5 H3 Q0.5 13.5 0.5 11 V7.5 Q0.5 5 2 3.5 Z" fill="url(#jg)" stroke="#7090b8" stroke-width="1"/>
<rect x="2" y="11" width="7" height="1.5" fill="#f8f0c8"/></svg>
<div class="t" style="left:352px;top:258px;">charsets.jar - C:\Program Files\Java\jre6\lib</div>
<div style="left:323px;top:280px;width:10px;height:1px;background:repeating-linear-gradient(to right,#a0a0a0 0,#a0a0a0 1px,transparent 1px,transparent 2px)"></div>
<svg style="left:335px;top:273px" width="11" height="14" viewBox="0 0 11 14"><defs style="display:none"><radialGradient id="jg" cx="0.45" cy="0.4" r="0.7"><stop offset="0" stop-color="#fff"/><stop offset="0.6" stop-color="#dfe8f4"/><stop offset="1" stop-color="#b8cce4"/></radialGradient></defs>
<rect x="1.5" y="0.5" width="8" height="2.5" rx="1" fill="#f8e8a0" stroke="#c8a030"/>
<path d="M2 3.5 H9 Q10.5 5 10.5 7.5 V11 Q10.5 13.5 8 13.5 H3 Q0.5 13.5 0.5 11 V7.5 Q0.5 5 2 3.5 Z" fill="url(#jg)" stroke="#7090b8" stroke-width="1"/>
<rect x="2" y="11" width="7" height="1.5" fill="#f8f0c8"/></svg>
<div class="t" style="left:352px;top:275px;">dnsns.jar - C:\Program Files\Java\jre6\lib\ext</div>
<div style="left:323px;top:297px;width:10px;height:1px;background:repeating-linear-gradient(to right,#a0a0a0 0,#a0a0a0 1px,transparent 1px,transparent 2px)"></div>
<svg style="left:335px;top:290px" width="11" height="14" viewBox="0 0 11 14"><defs style="display:none"><radialGradient id="jg" cx="0.45" cy="0.4" r="0.7"><stop offset="0" stop-color="#fff"/><stop offset="0.6" stop-color="#dfe8f4"/><stop offset="1" stop-color="#b8cce4"/></radialGradient></defs>
<rect x="1.5" y="0.5" width="8" height="2.5" rx="1" fill="#f8e8a0" stroke="#c8a030"/>
<path d="M2 3.5 H9 Q10.5 5 10.5 7.5 V11 Q10.5 13.5 8 13.5 H3 Q0.5 13.5 0.5 11 V7.5 Q0.5 5 2 3.5 Z" fill="url(#jg)" stroke="#7090b8" stroke-width="1"/>
<rect x="2" y="11" width="7" height="1.5" fill="#f8f0c8"/></svg>
<div class="t" style="left:352px;top:292px;">j3dcore.jar - C:\Program Files\Java\jre6\lib\ext</div>
<div style="left:323px;top:314px;width:10px;height:1px;background:repeating-linear-gradient(to right,#a0a0a0 0,#a0a0a0 1px,transparent 1px,transparent 2px)"></div>
<svg style="left:335px;top:307px" width="11" height="14" viewBox="0 0 11 14"><defs style="display:none"><radialGradient id="jg" cx="0.45" cy="0.4" r="0.7"><stop offset="0" stop-color="#fff"/><stop offset="0.6" stop-color="#dfe8f4"/><stop offset="1" stop-color="#b8cce4"/></radialGradient></defs>
<rect x="1.5" y="0.5" width="8" height="2.5" rx="1" fill="#f8e8a0" stroke="#c8a030"/>
<path d="M2 3.5 H9 Q10.5 5 10.5 7.5 V11 Q10.5 13.5 8 13.5 H3 Q0.5 13.5 0.5 11 V7.5 Q0.5 5 2 3.5 Z" fill="url(#jg)" stroke="#7090b8" stroke-width="1"/>
<rect x="2" y="11" width="7" height="1.5" fill="#f8f0c8"/></svg>
<div class="t" style="left:352px;top:309px;">j3dutils.jar - C:\Program Files\Java\jre6\lib\ext</div>
<div style="left:323px;top:331px;width:10px;height:1px;background:repeating-linear-gradient(to right,#a0a0a0 0,#a0a0a0 1px,transparent 1px,transparent 2px)"></div>
<svg style="left:335px;top:324px" width="11" height="14" viewBox="0 0 11 14"><defs style="display:none"><radialGradient id="jg" cx="0.45" cy="0.4" r="0.7"><stop offset="0" stop-color="#fff"/><stop offset="0.6" stop-color="#dfe8f4"/><stop offset="1" stop-color="#b8cce4"/></radialGradient></defs>
<rect x="1.5" y="0.5" width="8" height="2.5" rx="1" fill="#f8e8a0" stroke="#c8a030"/>
<path d="M2 3.5 H9 Q10.5 5 10.5 7.5 V11 Q10.5 13.5 8 13.5 H3 Q0.5 13.5 0.5 11 V7.5 Q0.5 5 2 3.5 Z" fill="url(#jg)" stroke="#7090b8" stroke-width="1"/>
<rect x="2" y="11" width="7" height="1.5" fill="#f8f0c8"/></svg>
<div class="t" style="left:352px;top:326px;">localedata.jar - C:\Program Files\Java\jre6\lib\ext</div>
<div style="left:323px;top:348px;width:10px;height:1px;background:repeating-linear-gradient(to right,#a0a0a0 0,#a0a0a0 1px,transparent 1px,transparent 2px)"></div>
<svg style="left:335px;top:341px" width="11" height="14" viewBox="0 0 11 14"><defs style="display:none"><radialGradient id="jg" cx="0.45" cy="0.4" r="0.7"><stop offset="0" stop-color="#fff"/><stop offset="0.6" stop-color="#dfe8f4"/><stop offset="1" stop-color="#b8cce4"/></radialGradient></defs>
<rect x="1.5" y="0.5" width="8" height="2.5" rx="1" fill="#f8e8a0" stroke="#c8a030"/>
<path d="M2 3.5 H9 Q10.5 5 10.5 7.5 V11 Q10.5 13.5 8 13.5 H3 Q0.5 13.5 0.5 11 V7.5 Q0.5 5 2 3.5 Z" fill="url(#jg)" stroke="#7090b8" stroke-width="1"/>
<rect x="2" y="11" width="7" height="1.5" fill="#f8f0c8"/></svg>
<div class="t" style="left:352px;top:343px;">QTJava.zip - C:\Program Files\Java\jre6\lib\ext</div>
<div style="left:323px;top:365px;width:10px;height:1px;background:repeating-linear-gradient(to right,#a0a0a0 0,#a0a0a0 1px,transparent 1px,transparent 2px)"></div>
<svg style="left:335px;top:358px" width="11" height="14" viewBox="0 0 11 14"><defs style="display:none"><radialGradient id="jg" cx="0.45" cy="0.4" r="0.7"><stop offset="0" stop-color="#fff"/><stop offset="0.6" stop-color="#dfe8f4"/><stop offset="1" stop-color="#b8cce4"/></radialGradient></defs>
<rect x="1.5" y="0.5" width="8" height="2.5" rx="1" fill="#f8e8a0" stroke="#c8a030"/>
<path d="M2 3.5 H9 Q10.5 5 10.5 7.5 V11 Q10.5 13.5 8 13.5 H3 Q0.5 13.5 0.5 11 V7.5 Q0.5 5 2 3.5 Z" fill="url(#jg)" stroke="#7090b8" stroke-width="1"/>
<rect x="2" y="11" width="7" height="1.5" fill="#f8f0c8"/></svg>
<div class="t" style="left:352px;top:360px;">sunjce_provider.jar - C:\Program Files\Java\jre6\lib\ext</div>
<div style="left:323px;top:382px;width:10px;height:1px;background:repeating-linear-gradient(to right,#a0a0a0 0,#a0a0a0 1px,transparent 1px,transparent 2px)"></div>
<svg style="left:335px;top:375px" width="11" height="14" viewBox="0 0 11 14"><defs style="display:none"><radialGradient id="jg" cx="0.45" cy="0.4" r="0.7"><stop offset="0" stop-color="#fff"/><stop offset="0.6" stop-color="#dfe8f4"/><stop offset="1" stop-color="#b8cce4"/></radialGradient></defs>
<rect x="1.5" y="0.5" width="8" height="2.5" rx="1" fill="#f8e8a0" stroke="#c8a030"/>
<path d="M2 3.5 H9 Q10.5 5 10.5 7.5 V11 Q10.5 13.5 8 13.5 H3 Q0.5 13.5 0.5 11 V7.5 Q0.5 5 2 3.5 Z" fill="url(#jg)" stroke="#7090b8" stroke-width="1"/>
<rect x="2" y="11" width="7" height="1.5" fill="#f8f0c8"/></svg>
<div class="t" style="left:352px;top:377px;">sunmscapi.jar - C:\Program Files\Java\jre6\lib\ext</div>
<div style="left:323px;top:399px;width:10px;height:1px;background:repeating-linear-gradient(to right,#a0a0a0 0,#a0a0a0 1px,transparent 1px,transparent 2px)"></div>
<svg style="left:335px;top:392px" width="11" height="14" viewBox="0 0 11 14"><defs style="display:none"><radialGradient id="jg" cx="0.45" cy="0.4" r="0.7"><stop offset="0" stop-color="#fff"/><stop offset="0.6" stop-color="#dfe8f4"/><stop offset="1" stop-color="#b8cce4"/></radialGradient></defs>
<rect x="1.5" y="0.5" width="8" height="2.5" rx="1" fill="#f8e8a0" stroke="#c8a030"/>
<path d="M2 3.5 H9 Q10.5 5 10.5 7.5 V11 Q10.5 13.5 8 13.5 H3 Q0.5 13.5 0.5 11 V7.5 Q0.5 5 2 3.5 Z" fill="url(#jg)" stroke="#7090b8" stroke-width="1"/>
<rect x="2" y="11" width="7" height="1.5" fill="#f8f0c8"/></svg>
<div class="t" style="left:352px;top:394px;">sunpkcs11.jar - C:\Program Files\Java\jre6\lib\ext</div>
<div style="left:323px;top:416px;width:10px;height:1px;background:repeating-linear-gradient(to right,#a0a0a0 0,#a0a0a0 1px,transparent 1px,transparent 2px)"></div>
<svg style="left:335px;top:409px" width="11" height="14" viewBox="0 0 11 14"><defs style="display:none"><radialGradient id="jg" cx="0.45" cy="0.4" r="0.7"><stop offset="0" stop-color="#fff"/><stop offset="0.6" stop-color="#dfe8f4"/><stop offset="1" stop-color="#b8cce4"/></radialGradient></defs>
<rect x="1.5" y="0.5" width="8" height="2.5" rx="1" fill="#f8e8a0" stroke="#c8a030"/>
<path d="M2 3.5 H9 Q10.5 5 10.5 7.5 V11 Q10.5 13.5 8 13.5 H3 Q0.5 13.5 0.5 11 V7.5 Q0.5 5 2 3.5 Z" fill="url(#jg)" stroke="#7090b8" stroke-width="1"/>
<rect x="2" y="11" width="7" height="1.5" fill="#f8f0c8"/></svg>
<div class="t" style="left:352px;top:411px;">vecmath.jar - C:\Program Files\Java\jre6\lib\ext</div>
<div style="left:326px;top:433px;width:7px;height:1px;background:repeating-linear-gradient(to right,#a0a0a0 0,#a0a0a0 1px,transparent 1px,transparent 2px)"></div>
<svg style="left:331px;top:425px" width="17" height="15" viewBox="0 0 17 15"><g transform="translate(0,2)"><path d="M1.5 3.5 H3 L4.5 1.5 H8 L9 3.5 H13.5 V6 H1.5 Z" fill="#fce8a8" stroke="#a09080" stroke-width="1"/>
<path d="M1.5 3.5 V11.5 L4 6.5 H15.5 L12.5 11.5 H1.5" fill="#f8d888" stroke="#c8a050" stroke-width="0.8"/>
<path d="M4 6.5 H15.5 L12.5 11.5 H1.5 Z" fill="#a8ccf4" stroke="#2848c0" stroke-width="1"/></g><rect x="13" y="0" width="4" height="1" fill="#1840b0"/><rect x="15" y="0" width="1" height="6" fill="#1840b0"/><rect x="12" y="5" width="4" height="1" fill="#1840b0"/><rect x="12" y="4" width="1" height="1" fill="#1840b0"/></svg>
<div class="t" style="left:352px;top:428px;">LinkerExt</div>
<div style="left:326px;top:450px;width:7px;height:1px;background:repeating-linear-gradient(to right,#a0a0a0 0,#a0a0a0 1px,transparent 1px,transparent 2px)"></div>
<svg style="left:331px;top:442px" width="17" height="15" viewBox="0 0 17 15"><g transform="translate(0,2)"><path d="M1.5 3.5 H3 L4.5 1.5 H8 L9 3.5 H13.5 V6 H1.5 Z" fill="#fce8a8" stroke="#a09080" stroke-width="1"/>
<path d="M1.5 3.5 V11.5 L4 6.5 H15.5 L12.5 11.5 H1.5" fill="#f8d888" stroke="#c8a050" stroke-width="0.8"/>
<path d="M4 6.5 H15.5 L12.5 11.5 H1.5 Z" fill="#a8ccf4" stroke="#2848c0" stroke-width="1"/></g><rect x="13" y="0" width="4" height="1" fill="#1840b0"/><rect x="15" y="0" width="1" height="6" fill="#1840b0"/><rect x="12" y="5" width="4" height="1" fill="#1840b0"/><rect x="12" y="4" width="1" height="1" fill="#1840b0"/></svg>
<div class="t" style="left:352px;top:445px;">imagej</div>
<div style="left:323px;top:467px;width:10px;height:1px;background:repeating-linear-gradient(to right,#a0a0a0 0,#a0a0a0 1px,transparent 1px,transparent 2px)"></div>
<svg style="left:335px;top:460px" width="11" height="14" viewBox="0 0 11 14"><defs style="display:none"><radialGradient id="jg" cx="0.45" cy="0.4" r="0.7"><stop offset="0" stop-color="#fff"/><stop offset="0.6" stop-color="#dfe8f4"/><stop offset="1" stop-color="#b8cce4"/></radialGradient></defs>
<rect x="1.5" y="0.5" width="8" height="2.5" rx="1" fill="#f8e8a0" stroke="#c8a030"/>
<path d="M2 3.5 H9 Q10.5 5 10.5 7.5 V11 Q10.5 13.5 8 13.5 H3 Q0.5 13.5 0.5 11 V7.5 Q0.5 5 2 3.5 Z" fill="url(#jg)" stroke="#7090b8" stroke-width="1"/>
<rect x="2" y="11" width="7" height="1.5" fill="#f8f0c8"/></svg>
<svg style="left:334px;top:459px" width="12" height="15" viewBox="0 0 12 15"><rect width="12" height="15" fill="#fff"/><defs><radialGradient id="jg2" cx="0.45" cy="0.4" r="0.7"><stop offset="0" stop-color="#fff"/><stop offset="0.6" stop-color="#dfe8f4"/><stop offset="1" stop-color="#b8cce4"/></radialGradient></defs>
<rect x="1.5" y="0.5" width="8" height="2.5" rx="1" fill="#f8e8a0" stroke="#c8a030"/>
<path d="M2 3.5 H9 Q10.5 5 10.5 7.5 V11 Q10.5 13.5 8 13.5 H3 Q0.5 13.5 0.5 11 V7.5 Q0.5 5 2 3.5 Z" fill="url(#jg2)" stroke="#7090b8" stroke-width="1"/>
<rect x="2" y="11" width="7" height="1.5" fill="#f8f0c8"/><rect x="2" y="7" width="1" height="1" fill="#1a2a60"/><rect x="1" y="8" width="1" height="2" fill="#1a2a60"/><rect x="3" y="8" width="1" height="2" fill="#1a2a60"/><rect x="2" y="10" width="1" height="1" fill="#1a2a60"/><rect x="5" y="7" width="1" height="4" fill="#1a2a60"/><rect x="8" y="7" width="1" height="1" fill="#1a2a60"/><rect x="7" y="8" width="1" height="2" fill="#1a2a60"/><rect x="9" y="8" width="1" height="2" fill="#1a2a60"/><rect x="8" y="10" width="1" height="1" fill="#1a2a60"/><rect x="1" y="7" width="1" height="1" fill="#7888b0"/><rect x="3" y="7" width="1" height="1" fill="#7888b0"/><rect x="1" y="10" width="1" height="1" fill="#7888b0"/><rect x="3" y="10" width="1" height="1" fill="#7888b0"/><rect x="7" y="7" width="1" height="1" fill="#7888b0"/><rect x="9" y="7" width="1" height="1" fill="#7888b0"/><rect x="7" y="10" width="1" height="1" fill="#7888b0"/><rect x="9" y="10" width="1" height="1" fill="#7888b0"/></svg>
<div class="t" style="left:352px;top:462px;">tools.jar - C:\Sun\SDK\jdk\lib</div>
<div style="left:321px;top:187px;width:1px;height:281px;background:repeating-linear-gradient(to bottom,#a0a0a0 0,#a0a0a0 1px,transparent 1px,transparent 2px)"></div>
<div style="left:317px;top:429px;width:9px;height:9px;background:#fff;box-shadow:inset 0 0 0 1px #808080"></div>
<div style="left:319px;top:433px;width:5px;height:1px;background:#000"></div>
<div style="left:321px;top:431px;width:1px;height:5px;background:#000"></div>
<div style="left:317px;top:446px;width:9px;height:9px;background:#fff;box-shadow:inset 0 0 0 1px #808080"></div>
<div style="left:319px;top:450px;width:5px;height:1px;background:#000"></div>
<div style="left:321px;top:448px;width:1px;height:5px;background:#000"></div>
<div style="left:758px;top:168px;width:88px;height:23px;background:#d4d0c8;box-shadow:inset -1px -1px #404040,inset 1px 1px #fff,inset -2px -2px #808080"></div>
<div class="t" style="left:757px;top:173px;width:88px;text-align:center">Add...</div>
<div style="left:758px;top:196px;width:88px;height:23px;background:#d4d0c8;box-shadow:inset -1px -1px #404040,inset 1px 1px #fff,inset -2px -2px #808080"></div>
<div class="t dis" style="left:757px;top:201px;width:88px;text-align:center">Edit...</div>
<div style="left:758px;top:224px;width:88px;height:23px;background:#d4d0c8;box-shadow:inset -1px -1px #404040,inset 1px 1px #fff,inset -2px -2px #808080"></div>
<div class="t" style="left:757px;top:229px;width:88px;text-align:center">Remove</div>
<div style="left:758px;top:252px;width:88px;height:23px;background:#d4d0c8;box-shadow:inset -1px -1px #404040,inset 1px 1px #fff,inset -2px -2px #808080"></div>
<div class="t dis" style="left:757px;top:257px;width:88px;text-align:center">Up</div>
<div style="left:758px;top:280px;width:88px;height:23px;background:#d4d0c8;box-shadow:inset -1px -1px #404040,inset 1px 1px #fff,inset -2px -2px #808080"></div>
<div class="t dis" style="left:757px;top:285px;width:88px;text-align:center">Down</div>
<div style="left:758px;top:308px;width:88px;height:23px;background:#d4d0c8;box-shadow:inset -1px -1px #404040,inset 1px 1px #fff,inset -2px -2px #808080"></div>
<div class="t dis" style="left:757px;top:313px;width:88px;text-align:center">Restore Default</div>
<div style="left:289px;top:508px;width:13px;height:13px;background:#fff;box-shadow:inset 1px 1px #808080,inset -1px -1px #fff,inset 2px 2px #404040,inset -2px -2px #d4d0c8"></div>
<div class="t" style="left:306px;top:509px;">Search for duplicate source files on the path</div>
<div style="left:690px;top:549px;width:76px;height:23px;background:#d4d0c8;box-shadow:inset -1px -1px #404040,inset 1px 1px #fff,inset -2px -2px #808080"></div>
<div class="t dis" style="left:689px;top:554px;width:76px;text-align:center">Apply</div>
<div style="left:771px;top:549px;width:76px;height:23px;background:#d4d0c8;box-shadow:inset -1px -1px #404040,inset 1px 1px #fff,inset -2px -2px #808080"></div>
<div class="t dis" style="left:770px;top:554px;width:76px;text-align:center">Revert</div>
<div style="left:702px;top:600px;width:76px;height:23px;background:#000"></div>
<div style="left:703px;top:601px;width:74px;height:21px;background:#d4d0c8;box-shadow:inset -1px -1px #404040,inset 1px 1px #fff,inset -2px -2px #808080"></div>
<div class="t" style="left:701px;top:605px;width:76px;text-align:center">Run</div>
<div style="left:783px;top:600px;width:76px;height:23px;background:#d4d0c8;box-shadow:inset -1px -1px #404040,inset 1px 1px #fff,inset -2px -2px #808080"></div>
<div class="t" style="left:782px;top:605px;width:76px;text-align:center">Close</div>
</body></html>
